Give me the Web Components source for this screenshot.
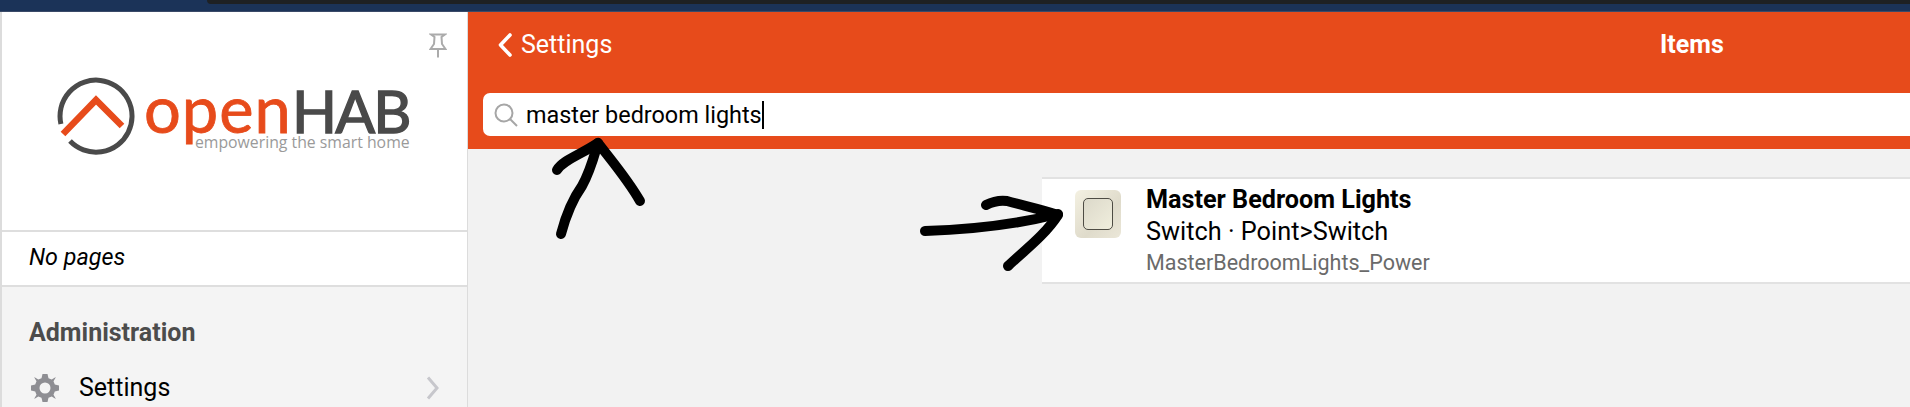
<!DOCTYPE html>
<html>
<head>
<meta charset="utf-8">
<title>openHAB</title>
<style>
    html, body { margin: 0; padding: 0; height: 407px; overflow: hidden; background: #f2f2f2; }
    body { font-family: Roboto, "Liberation Sans", sans-serif; }
</style>
</head>
<body>
<oh-app>
    <oh-sidebar slot="side"></oh-sidebar>
    <oh-navbar slot="main" back="Settings" title="Items" query="master bedroom lights"></oh-navbar>
    <oh-item slot="main" name="Master Bedroom Lights" type="Switch · Point&gt;Switch" id-name="MasterBedroomLights_Power"></oh-item>
</oh-app>
<oh-scribbles></oh-scribbles>

<script>
class OhApp extends HTMLElement {
    constructor() {
        super();
        this.attachShadow({ mode: 'open' });
    }

    connectedCallback() {
        this.shadowRoot.innerHTML = `
            <style>
                :host {
                    display: flex;
                    flex-direction: column;
                    width: 1910px;
                    height: 407px;
                    overflow: hidden;
                }
                .top {
                    flex: none;
                    height: 11px;
                    background: #1b3358;
                    border-bottom: 1px solid #3a4a68;
                    padding-left: 207px;
                }
                .top div {
                    height: 4px;
                    background: #1e2124;
                    border-bottom-left-radius: 6px;
                }
                .body {
                    flex: 1;
                    display: grid;
                    grid-template-columns: 468px 1fr;
                    min-height: 0;
                }
                .main { min-width: 0; display: flex; flex-direction: column; }
            </style>
            <div class="top"><div></div></div>
            <div class="body">
                <slot name="side"></slot>
                <div class="main"><slot name="main"></slot></div>
            </div>
        `;
    }
}

class OhLogo extends HTMLElement {
    constructor() {
        super();
        this.attachShadow({ mode: 'open' });
    }

    connectedCallback() {
        this.shadowRoot.innerHTML = `
            <style>
                :host { display: flex; align-items: flex-start; gap: 9px; width: 360px; }
                svg { flex: none; display: block; }
                .words { display: flex; flex-direction: column; align-items: flex-end; padding-top: 2px; }
                .name { display: flex; align-items: baseline; height: 58px; line-height: 58px; font-family: Lato, sans-serif; white-space: nowrap; }
                .open { color: #e74b1b; font-size: 65px; font-weight: 400; -webkit-text-stroke: .8px #e74b1b; letter-spacing: 1px; }
                .hab { color: #4a4a4a; font-size: 59px; font-weight: 400; -webkit-text-stroke: 1.4px #4a4a4a; letter-spacing: -1.800px; }
                .tag { color: #9a9a9a; font: 400 15.800px/18px "Open Sans", sans-serif; margin-top: -4px; white-space: nowrap; }
            </style>
            <svg width="78" height="78" viewBox="0 0 78 78">
                <path d="M3.900 47 A36 36 0 1 1 13 64" fill="none" stroke="#4a4a4a" stroke-width="5"/>
                <path d="M6 57 L39 23 L65 49" fill="none" stroke="#e74b1b" stroke-width="6.500"/>
            </svg>
            <div class="words">
                <div class="name"><span class="open">open</span><span class="hab">HAB</span></div>
                <div class="tag">empowering the smart home</div>
            </div>
        `;
    }
}

class OhSidebar extends HTMLElement {
    constructor() {
        super();
        this.attachShadow({ mode: 'open' });
    }

    connectedCallback() {
        this.shadowRoot.innerHTML = `
            <style>
                :host {
                    display: flex;
                    flex-direction: column;
                    box-sizing: border-box;
                    height: 395px;
                    background: #f4f4f4;
                    border-left: 2px solid #dcdcdc;
                    border-right: 1px solid #dcdcdc;
                    overflow: hidden;
                }
                .head {
                    height: 220px;
                    background: #fff;
                    border-bottom: 2px solid #dedede;
                    display: flex;
                    flex-direction: column;
                    box-sizing: border-box;
                    padding: 21px 20px 0 55px;
                }
                .pin { align-self: flex-end; display: block; }
                .logo-wrap { margin-top: 19px; }
                .nopages {
                    background: #fff;
                    height: 55px;
                    border-bottom: 2px solid #dedede;
                    display: flex;
                    align-items: center;
                    padding: 0 0 3px 27px;
                    box-sizing: border-box;
                    font-size: 23.300px;
                    font-style: italic;
                    color: #000;
                }
                .title {
                    margin: 29px 0 0 27px;
                    font-size: 25px;
                    line-height: 34px;
                    font-weight: 700;
                    color: #4c4c4c;
                }
                .row {
                    display: flex;
                    align-items: center;
                    margin-top: 23px;
                    padding: 0 28px 0 29px;
                }
                .row span { flex: 1; margin-left: 20px; font-size: 25px; line-height: 30px; color: #000; }
            </style>
            <div class="head">
                <svg class="pin" width="18" height="25" viewBox="0 0 18 25" fill="none" stroke="#ababab" stroke-width="2">
                    <path d="M2 1.500 H16 L12.500 4 L13 11 L16.500 16 H1.500 L5 11 L5.500 4 Z M9 16 V24.500"/>
                </svg>
                <div class="logo-wrap"><oh-logo></oh-logo></div>
            </div>
            <div class="nopages">No pages</div>
            <div class="title">Administration</div>
            <div class="row">
                <svg width="28" height="28" viewBox="0 0 28 28" fill="#8e8e93">
                    <path fill-rule="evenodd" d="M11.500 0 H16.500 L17.500 4.200 L20.700 5.500 L24.400 3.300 L24.700 3.600 L22.500 7.300 L23.800 10.500 L28 11.500 V16.500 L23.800 17.500 L22.500 20.700 L24.700 24.400 L24.400 24.700 L20.700 22.500 L17.500 23.800 L16.500 28 H11.500 L10.500 23.800 L7.300 22.500 L3.600 24.700 L3.300 24.400 L5.500 20.700 L4.200 17.500 L0 16.500 V11.500 L4.200 10.500 L5.500 7.300 L3.300 3.600 L3.600 3.300 L7.300 5.500 L10.500 4.200 Z M14 8.500 A5.500 5.500 0 1 0 14 19.500 A5.500 5.500 0 1 0 14 8.500 Z"/>
                </svg>
                <span>Settings</span>
                <svg width="13" height="24" viewBox="0 0 13 24" fill="none" stroke="#c7c7cc" stroke-width="3">
                    <path d="M2 1.500 L11 12 L2 22.500"/>
                </svg>
            </div>
        `;
    }
}

class OhNavbar extends HTMLElement {
    constructor() {
        super();
        this.attachShadow({ mode: 'open' });
    }

    connectedCallback() {
        this.shadowRoot.innerHTML = `
            <style>
                :host {
                    display: block;
                    flex: none;
                    height: 137px;
                    box-sizing: border-box;
                    background: #e74b1b;
                    color: #fff;
                    padding: 0 0 0 15px;
                }
                .bar {
                    height: 81px;
                    display: grid;
                    grid-template-columns: 1177px auto;
                    align-items: center;
                    padding-bottom: 16px;
                    box-sizing: border-box;
                }
                .back { display: flex; align-items: center; gap: 9px; padding-left: 15px; font-size: 25px; }
                .title { font-size: 25px; font-weight: 700; }
                .search {
                    height: 43px;
                    background: #fff;
                    border-radius: 7px 0 0 7px;
                    display: flex;
                    align-items: center;
                    padding-left: 11px;
                    color: #000;
                    font-size: 23.400px;
                }
                .search svg { margin-right: 8px; }
                .caret { width: 2px; height: 28px; background: #000; }
            </style>
            <div class="bar">
                <div class="back">
                    <svg width="14" height="24" viewBox="0 0 14 24" fill="none" stroke="#fff" stroke-width="3.600" stroke-linecap="round" stroke-linejoin="round">
                        <path d="M12 2 L2.500 12 L12 22"/>
                    </svg>
                    <span>${this.getAttribute('back')}</span>
                </div>
                <div class="title">${this.getAttribute('title')}</div>
            </div>
            <div class="search">
                <svg width="24" height="24" viewBox="0 0 24 24" fill="none" stroke="#a6a6a6" stroke-width="2">
                    <circle cx="10" cy="10" r="8.500"/>
                    <path d="M16 16 L23 23"/>
                </svg>
                <span>${this.getAttribute('query')}</span><div class="caret"></div>
            </div>
        `;
    }
}

class OhItem extends HTMLElement {
    constructor() {
        super();
        this.attachShadow({ mode: 'open' });
    }

    connectedCallback() {
        this.shadowRoot.innerHTML = `
            <style>
                :host {
                    display: flex;
                    flex: none;
                    box-sizing: border-box;
                    height: 107px;
                    margin: 28px 0 0 574px;
                    background: #fff;
                    border-top: 2px solid #e2e2e2;
                    border-bottom: 2px solid #e2e2e2;
                    padding: 5px 0 0 33px;
                    gap: 25px;
                }
                .icon {
                    flex: none;
                    box-sizing: border-box;
                    width: 46px;
                    height: 48px;
                    margin-top: 6px;
                    border-radius: 6px;
                    background: linear-gradient(135deg, #f4f1e2, #dfdbcb 60%, #ebe7d8);
                    padding: 8px;
                }
                .icon div {
                    box-sizing: border-box;
                    height: 32px;
                    border: 1.500px solid #4e4c44;
                    border-radius: 5px;
                    background: linear-gradient(135deg, #dcd9ca, #f0eedd);
                }
                .name { font-size: 25.200px; line-height: 32px; font-weight: 700; color: #000; }
                .type { font-size: 25.300px; line-height: 32px; color: #000; }
                .id { font-size: 21.500px; line-height: 30px; color: #6a6a6a; }
            </style>
            <div class="icon"><div></div></div>
            <div class="text">
                <div class="name">${this.getAttribute('name')}</div>
                <div class="type">${this.getAttribute('type')}</div>
                <div class="id">${this.getAttribute('id-name')}</div>
            </div>
        `;
    }
}

// hand drawn arrows on top of the screenshot
class OhScribbles extends HTMLElement {
    constructor() {
        super();
        this.attachShadow({ mode: 'open' });
    }

    connectedCallback() {
        this.shadowRoot.innerHTML = `
            <style>
                :host { position: absolute; left: 0; top: 0; width: 1910px; height: 407px; pointer-events: none; }
                svg { display: block; }
                path { fill: none; stroke: #000; stroke-width: 10; stroke-linecap: round; stroke-linejoin: round; }
            </style>
            <svg width="1910" height="407" viewBox="0 0 1910 407">
                <path d="M561 234 C566 215 572 200 582 186 C590 172 593 160 598 143"/>
                <path d="M557 170 C563 160 580 155 598 143 C615 165 628 180 640 201"/>
                <path d="M925 231 C960 230 1010 226 1058 214"/>
                <path d="M986 205 C992 202 1000 200 1007 201 C1025 206 1040 209 1058 215 C1045 235 1025 250 1008 266"/>
            </svg>
        `;
    }
}

customElements.define('oh-app', OhApp);
customElements.define('oh-logo', OhLogo);
customElements.define('oh-sidebar', OhSidebar);
customElements.define('oh-navbar', OhNavbar);
customElements.define('oh-item', OhItem);
customElements.define('oh-scribbles', OhScribbles);
</script>
</body>
</html>
